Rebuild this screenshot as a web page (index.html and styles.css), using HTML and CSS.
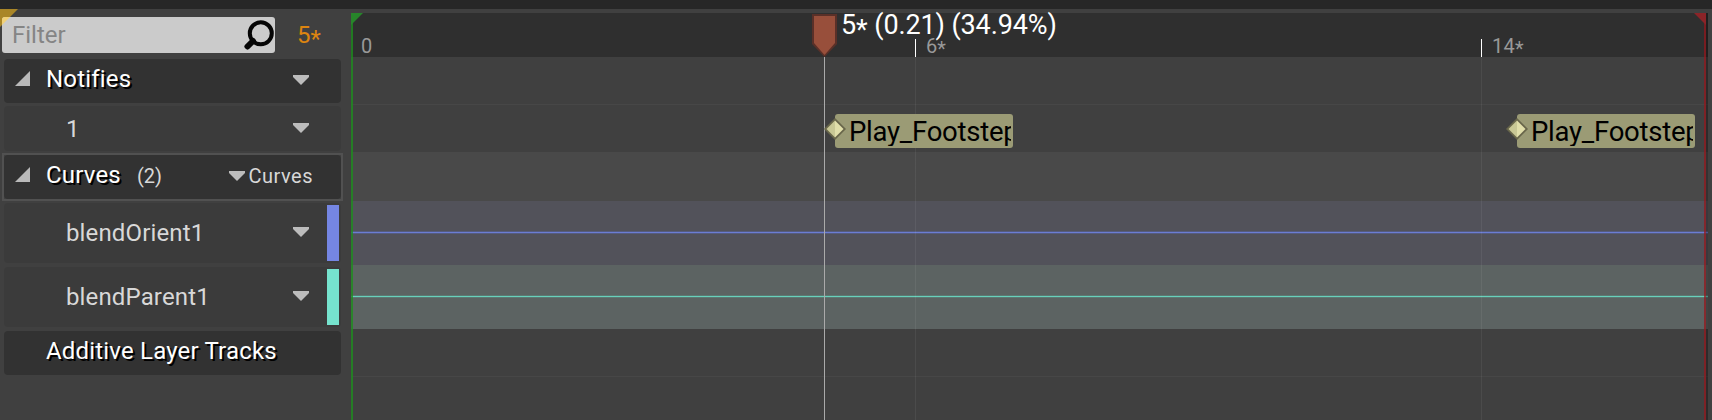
FILE: index.html
```html
<!DOCTYPE html>
<html lang="en">
<head>
<meta charset="utf-8">
<title>Animation timeline</title>
<link rel="stylesheet" href="styles.css">
</head>
<body>
<div class="topbar"></div>
<div class="editor">
  <svg class="corner" width="18" height="18" viewBox="0 0 18 18"><path d="M0 0H18L0 18Z"/></svg>
  <aside class="sidebar">
    <div class="filter-row">
      <div class="filter"><span class="filter-text">Filter</span>
        <svg class="search" width="32" height="32" viewBox="0 0 32 32"><circle cx="17.8" cy="14.3" r="11"/><path class="handle" d="M10 22L4.5 27.5"/></svg>
      </div>
      <span class="frame">5<span class="star">*</span></span>
    </div>
    <div class="row head notifies">
      <svg class="expander" width="15" height="15" viewBox="0 0 15 15"><path d="M15 0V15H0Z"/></svg>
      <span class="title">Notifies</span>
      <svg class="arrow" width="16" height="10" viewBox="0 0 16 10"><path d="M0 0H16V2L8 10L0 2Z"/></svg>
    </div>
    <div class="row one">
      <span class="label">1</span>
      <svg class="arrow" width="16" height="10" viewBox="0 0 16 10"><path d="M0 0H16V2L8 10L0 2Z"/></svg>
    </div>
    <div class="selected">
      <div class="row head curves">
        <svg class="expander" width="15" height="15" viewBox="0 0 15 15"><path d="M15 0V15H0Z"/></svg>
        <span class="title">Curves</span>
        <span class="count">(2)</span>
        <svg class="arrow" width="16" height="10" viewBox="0 0 16 10"><path d="M0 0H16V2L8 10L0 2Z"/></svg>
        <span class="menu">Curves</span>
      </div>
    </div>
    <div class="row curve orient">
      <span class="label">blendOrient1</span>
      <svg class="arrow" width="16" height="10" viewBox="0 0 16 10"><path d="M0 0H16V2L8 10L0 2Z"/></svg>
      <i class="swatch blue"></i>
    </div>
    <div class="row curve parent">
      <span class="label">blendParent1</span>
      <svg class="arrow" width="16" height="10" viewBox="0 0 16 10"><path d="M0 0H16V2L8 10L0 2Z"/></svg>
      <i class="swatch teal"></i>
    </div>
    <div class="row head additive"><span class="title">Additive Layer Tracks</span></div>
  </aside>
  <main class="timeline">
    <div class="ruler"></div>
    <div class="track plain"></div>
    <div class="track notify"></div>
    <div class="track group"></div>
    <div class="track lane blue-lane"></div>
    <div class="track lane teal-lane"></div>
    <div class="track plain last"></div>
    <div class="outside"></div>
    <i class="start"></i>
    <i class="end"></i>
    <svg class="flag" width="12" height="12" viewBox="0 0 12 12"><path d="M0 0H12L0 12Z"/></svg>
    <svg class="flag end-flag" width="12" height="12" viewBox="0 0 12 12"><path d="M0 0H12V12Z"/></svg>
    <span class="tick-label zero">0</span>
    <i class="grid six"></i><i class="grid fourteen"></i>
    <span class="tick-label t-six">6<span class="star">*</span></span>
    <span class="tick-label t-fourteen">14<span class="star">*</span></span>
    <i class="playline"></i>
    <svg class="playhead" width="27" height="44" viewBox="0 0 27 44"><path class="rim" d="M1 1H26V31L13.5 44L1 31Z"/><path class="fill" d="M3 3H24V30L13.5 42L3 30Z"/></svg>
    <span class="time">5<span class="star">*</span> (0.21) (34.94%)</span>
    <div class="event first"><span>Play_Footstep</span></div>
    <svg class="key first-key" width="24" height="24" viewBox="0 0 24 24"><path class="key-rim" d="M12 1L23 12L12 23L1 12Z"/><path class="key-l" d="M12 3.5V20.5L3.5 12Z"/><path class="key-r" d="M12 3.5L20.5 12L12 20.5Z"/></svg>
    <div class="event second"><span>Play_Footstep</span></div>
    <svg class="key second-key" width="24" height="24" viewBox="0 0 24 24"><path class="key-rim" d="M12 1L23 12L12 23L1 12Z"/><path class="key-l" d="M12 3.5V20.5L3.5 12Z"/><path class="key-r" d="M12 3.5L20.5 12L12 20.5Z"/></svg>
  </main>
</div>
</body>
</html>
```
FILE: styles.css
```css
* { box-sizing: border-box; }
body { margin: 0; width: 1712px; height: 420px; overflow: hidden; background: #404040; font-family: Roboto, sans-serif; font-size: 24px; line-height: 28px; color: #d8d8d8; }
svg { display: block; flex: none; }
span { white-space: nowrap; }
.star { position: relative; top: .17em; letter-spacing: 0; }
.topbar { height: 9px; background: #272727; }
.editor { display: flex; position: relative; height: 411px; }
.corner { position: absolute; left: 0; top: 0; fill: #a98628; }
.sidebar { width: 351px; padding: 8px 8px 0 2px; flex: none; }
.filter-row { display: flex; height: 42px; }
.filter { position: relative; display: flex; justify-content: space-between; width: 273px; height: 36px; padding: 4px 0 0 10px; border-radius: 3px; background: #cbcbcb; color: #858585; }
.filter::before { content: ""; position: absolute; left: 0; top: 0; border-top: 8px solid #f1d178; border-right: 8px solid transparent; border-radius: 3px 0 0; }
.search { margin-top: -2px; fill: none; stroke: #050505; stroke-width: 4; }
.handle { stroke-width: 6; stroke-linecap: round; }
.frame { margin: 4px 0 0 22px; color: #dd8510; }
.row { display: flex; align-items: flex-start; margin-left: 2px; width: 337px; border-radius: 4px; background: #3b3b3b; }
.head { background: #323232; color: #fff; }
.title { text-shadow: 2px 2px 0 #000; letter-spacing: .18px; }
.expander { margin: 12px 16px 0 11px; fill: #b9b9b9; }
.arrow { margin: 16px 32px 0 auto; fill: #bcbcbc; }
.notifies { height: 44px; }
.notifies .title { margin-top: 6px; }
.one { height: 45px; margin-top: 3px; }
.one .arrow { margin-top: 17px; }
.label { margin: 9px 0 0 62px; letter-spacing: .14px; }
.selected { width: 341px; height: 48px; margin-top: 2px; border: 2px solid #515151; }
.selected .row { width: 337px; height: 44px; margin: 0; }
.curves .title { margin-top: 6px; }
.count { margin: 7px 0 0 16px; font-size: 20px; color: #d8d8d8; }
.curves .arrow { margin: 16px 4px 0 auto; }
.menu { margin: 7px 28px 0 0; font-size: 20px; letter-spacing: .5px; color: #d8d8d8; }
.curve { height: 60px; }
.orient { margin-top: 2px; }
.parent { margin-top: 4px; }
.curve .label { margin-top: 16px; }
.curve .arrow { margin: 24px 18px 0 auto; }
.swatch { width: 12px; height: 56px; margin: 2px 2px 0 0; }
.blue { background: #7586e3; }
.teal { background: #76e3ce; }
.additive { height: 44px; margin-top: 4px; padding: 6px 0 0 42px; }
.timeline { position: relative; width: 1357px; height: 407px; margin-top: 4px; }
.ruler { height: 44px; background: #2f2f2f; }
.track { height: 48px; border-bottom: 1px solid #474747; }
.notify { height: 47px; border: 0; }
.group { height: 49px; border: 0; background: #494949; }
.lane { height: 64px; border: 0; }
.blue-lane { background: linear-gradient(#6b7dd3, #6b7dd3) 0 31px / 100% 1px no-repeat, linear-gradient(#555c80, #555c80) 0 30px / 100% 3px no-repeat, #52525a; }
.teal-lane { background: linear-gradient(#68d0bb, #68d0bb) 0 31px / 100% 1px no-repeat, linear-gradient(#5c7972, #5c7972) 0 30px / 100% 3px no-repeat, #5c6362; }
.outside { position: absolute; right: 0; top: 0; width: 2px; height: 407px; background: rgba(0,0,0,.3); }
.start, .end, .grid, .playline { position: absolute; top: 0; height: 407px; }
.start { left: 0; width: 2px; background: rgba(30,140,30,.8); }
.end { left: 1353px; width: 2px; background: rgba(150,22,28,.72); }
.flag { position: absolute; left: 0; top: 0; fill: #27852a; }
.end-flag { left: 1343px; fill: #8b2428; }
.tick-label { position: absolute; top: 19px; font-size: 20px; color: #999; }
.zero { left: 10px; }
.t-six { left: 575px; }
.t-fourteen { left: 1141px; letter-spacing: .3px; }
.grid { width: 1px; background: linear-gradient(#fff, #fff) 0 26px / 1px 18px no-repeat, linear-gradient(rgba(255,255,255,.06), rgba(255,255,255,.06)) 0 44px no-repeat; }
.six { left: 564px; }
.fourteen { left: 1130px; }
.playline { left: 473px; width: 1px; top: 44px; height: 363px; background: #aaa; }
.playhead { position: absolute; left: 460px; top: 0; }
.rim { fill: #5a3028; }
.fill { fill: #984f3b; }
.time { position: absolute; left: 490px; top: -4px; font-size: 27px; line-height: 32px; letter-spacing: -.12px; color: #fff; }
.event { position: absolute; top: 101px; width: 178px; height: 34px; border-radius: 3px; background: #9b9b75; color: #000; font-size: 27.5px; line-height: 36px; letter-spacing: -.25px; padding: 0 2px 0 14px; }
.event span { display: block; height: 32px; overflow: hidden; }
.first { left: 484px; }
.second { left: 1166px; }
.key { position: absolute; top: 104px; }
.first-key { left: 472px; }
.second-key { left: 1154px; }
.key-rim { fill: #68664a; }
.key-l { fill: #c9c895; }
.key-r { fill: #e1dfaa; }
```
